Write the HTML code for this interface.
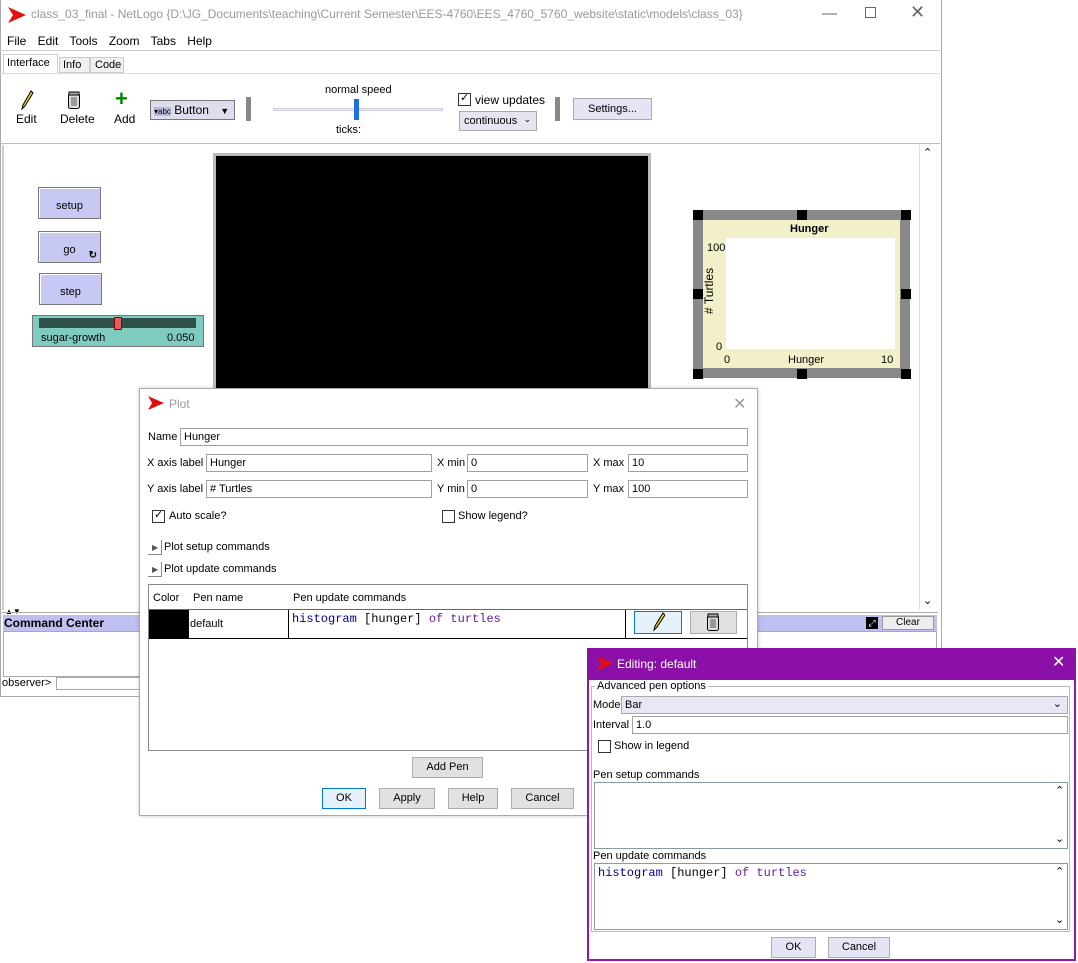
<!DOCTYPE html>
<html><head><meta charset="utf-8"><style>
*{box-sizing:border-box;margin:0;padding:0}
body{width:1078px;height:963px;position:relative;background:#fff;font-family:"Liberation Sans",sans-serif;font-size:12px;color:#000;overflow:hidden}
.a{position:absolute;white-space:nowrap}
.btn{position:absolute;background:#e1e1e1;border:1px solid #adadad;text-align:center;font-size:12px}
.nbtn{position:absolute;background:#c8c8f4;border:1px solid #777;box-shadow:inset 1px 1px 0 #fff;text-align:center;font-size:11px}
.inp{position:absolute;background:#fff;border:1px solid #a0a0a0;padding-left:3px;font-size:11px;line-height:16px}
.mono{font-family:"Liberation Mono",monospace;font-size:12px}
.cb{position:absolute;width:13px;height:13px;border:1px solid #333;background:#fff}
.l{font-size:11px}
</style></head><body>
<div class="a" style="left:0;top:0;width:942px;height:697px;border:1px solid #aaa;border-top:none;background:#fff"></div>
<svg class="a" style="left:8px;top:7px" width="18" height="16"><path d="M0 0 L18 8 L0 16 L5 8Z" fill="#e01010"/></svg>
<div class="a" style="left:31px;top:7px;color:#999;font-size:12px">class_03_final - NetLogo {D:\JG_Documents\teaching\Current Semester\EES-4760\EES_4760_5760_website\static\models\class_03}</div>
<div class="a" style="left:822px;top:5px;color:#666;font-size:15px">—</div>
<div class="a" style="left:865px;top:7px;width:11px;height:11px;border:1px solid #666"></div>
<div class="a" style="left:910px;top:2px;color:#666;font-size:18px">✕</div>
<div class="a" style="left:7px;top:34px;font-size:12px;word-spacing:8px">File Edit Tools Zoom Tabs Help</div>
<div class="a" style="left:0;top:50px;width:940px;height:1px;background:#ccc"></div>
<div class="a" style="left:3px;top:54px;width:55px;height:19px;border:1px solid #ccc;border-bottom:none;background:#fff;padding:2px 3px;font-size:11px">Interface</div>
<div class="a" style="left:59px;top:57px;width:31px;height:16px;border:1px solid #ccc;background:#f0f0f0;padding:1px 3px;font-size:11px">Info</div>
<div class="a" style="left:90px;top:57px;width:34px;height:16px;border:1px solid #ccc;background:#f0f0f0;padding:1px 4px;font-size:11px">Code</div>
<div class="a" style="left:0;top:73px;width:940px;height:71px;border-top:1px solid #ddd;border-bottom:1px solid #bbb"></div>
<svg class="a" style="left:18px;top:90px" width="16" height="20"><path d="M13 1 L5 15 L4 19 L7 16 L15 3Z" fill="#f0d020" stroke="#000"/></svg>
<div class="a" style="left:16px;top:112px">Edit</div>
<svg class="a" style="left:67px;top:91px" width="14" height="18"><rect x="1.5" y="2.5" width="11" height="15" rx="2" fill="#ddd" stroke="#000"/><rect x="2" y="1" width="10" height="3" fill="#aaa" stroke="#000"/><path d="M5 6v9M7 6v9M9 6v9" stroke="#555"/></svg>
<div class="a" style="left:60px;top:112px">Delete</div>
<div class="a" style="left:115px;top:86px;color:#080;font-size:22px;font-weight:bold">+</div>
<div class="a" style="left:114px;top:112px">Add</div>
<div class="a" style="left:150px;top:100px;width:85px;height:20px;border:1px solid #777;background:#dde;font-size:12px;padding:2px 3px"><span style="font-size:8px;background:#bbd">▾abc</span> Button <span style="margin-left:8px;font-size:9px">▼</span></div>
<div class="a" style="left:246px;top:97px;width:5px;height:24px;background:#888"></div>
<div class="a" style="left:325px;top:84px;font-size:11px">normal speed</div>
<div class="a" style="left:273px;top:108px;width:170px;height:3px;border:1px solid #ccd;background:#eef"></div>
<div class="a" style="left:354px;top:99px;width:5px;height:21px;background:#1e70e0"></div>
<div class="a" style="left:336px;top:124px;font-size:11px">ticks:</div>
<div class="cb" style="left:458px;top:93px"><span style="position:absolute;left:1px;top:-3px;font-size:11px">✓</span></div>
<div class="a" style="left:475px;top:93px">view updates</div>
<div class="a" style="left:459px;top:111px;width:78px;height:20px;border:1px solid #aaa;background:#e5e5f0;padding:3px 4px;font-size:11px">continuous <span style="font-size:9px;position:absolute;right:5px;top:2px">⌄</span></div>
<div class="a" style="left:555px;top:97px;width:5px;height:24px;background:#888"></div>
<div class="a" style="left:573px;top:98px;width:79px;height:22px;border:1px solid #aaa;background:#e4e4f4;text-align:center;padding-top:4px;font-size:11px">Settings...</div>
<div class="a" style="left:2px;top:145px;width:2px;height:465px;background:#ccc"></div>
<div class="a" style="left:919px;top:145px;width:18px;height:465px;border-left:1px solid #ddd"></div>
<div class="a" style="left:923px;top:146px;font-size:11px">⌃</div>
<div class="a" style="left:923px;top:594px;font-size:11px">⌄</div>
<div class="nbtn" style="left:38px;top:187px;width:63px;height:32px;line-height:36px">setup</div>
<div class="nbtn" style="left:38px;top:231px;width:63px;height:32px;line-height:36px">go<span style="position:absolute;right:3px;top:6px;font-size:10px;font-weight:bold">↻</span></div>
<div class="nbtn" style="left:39px;top:273px;width:63px;height:32px;line-height:36px">step</div>
<div class="a" style="left:32px;top:315px;width:172px;height:32px;background:#80cbc0;border:1px solid #777"></div>
<div class="a" style="left:39px;top:318px;width:157px;height:10px;background:#2e5048"></div>
<div class="a" style="left:114px;top:317px;width:8px;height:13px;background:#e06060;border:1px solid #800"></div>
<div class="a" style="left:41px;top:332px;font-size:11px">sugar-growth</div>
<div class="a" style="left:167px;top:332px;font-size:11px">0.050</div>
<div class="a" style="left:213px;top:153px;width:438px;height:240px;background:#000;border:3px solid #bbb"></div>
<div class="a" style="left:693px;top:210px;width:217px;height:168px;background:#888"></div>
<div class="a" style="left:703px;top:220px;width:197px;height:148px;background:#f2f0c8"></div>
<div class="a" style="left:726px;top:238px;width:169px;height:111px;background:#fff"></div>
<div class="a" style="left:790px;top:223px;font-weight:bold;font-size:11px">Hunger</div>
<div class="a" style="left:707px;top:242px;font-size:11px">100</div>
<div class="a" style="left:716px;top:341px;font-size:11px">0</div>
<div class="a" style="left:724px;top:354px;font-size:11px">0</div>
<div class="a" style="left:788px;top:354px;font-size:11px">Hunger</div>
<div class="a" style="left:881px;top:354px;font-size:11px">10</div>
<div class="a" style="left:686px;top:284px;font-size:12px;transform:rotate(-90deg)">#&nbsp;Turtles</div>
<div class="a" style="left:693px;top:210px;width:10px;height:10px;background:#000"></div>
<div class="a" style="left:797px;top:210px;width:10px;height:10px;background:#000"></div>
<div class="a" style="left:901px;top:210px;width:10px;height:10px;background:#000"></div>
<div class="a" style="left:693px;top:289px;width:10px;height:10px;background:#000"></div>
<div class="a" style="left:901px;top:289px;width:10px;height:10px;background:#000"></div>
<div class="a" style="left:693px;top:369px;width:10px;height:10px;background:#000"></div>
<div class="a" style="left:797px;top:369px;width:10px;height:10px;background:#000"></div>
<div class="a" style="left:901px;top:369px;width:10px;height:10px;background:#000"></div>
<div class="a" style="left:5px;top:607px;font-size:8px">▲▼</div>
<div class="a" style="left:2px;top:612px;width:936px;height:1px;background:#aaa"></div>
<div class="a" style="left:3px;top:615px;width:934px;height:16px;background:#c0c0f0"></div>
<div class="a" style="left:4px;top:616px;font-weight:bold;font-size:12px">Command Center</div>
<div class="a" style="left:866px;top:617px;width:12px;height:12px;background:#000;color:#fff;font-size:9px;text-align:center;line-height:12px">⤢</div>
<div class="a" style="left:882px;top:616px;width:52px;height:14px;background:#eee;border:1px solid #999;font-size:10px;text-align:center">Clear</div>
<div class="a" style="left:3px;top:631px;width:934px;height:46px;border:1px solid #aaa"></div>
<div class="a" style="left:2px;top:677px;font-size:11px">observer&gt;</div>
<div class="a" style="left:56px;top:677px;width:100px;height:13px;border:1px solid #aaa"></div>
<!-- plot dialog -->
<div class="a" style="left:139px;top:388px;width:619px;height:428px;background:#fff;border:1px solid #aaa;box-shadow:0 0 4px rgba(0,0,0,.2)"></div>
<svg class="a" style="left:148px;top:396px" width="16" height="14"><path d="M0 0 L16 7 L0 14 L4 7Z" fill="#e01010"/></svg>
<div class="a" style="left:169px;top:397px;color:#999;font-size:12px">Plot</div>
<div class="a" style="left:733px;top:394px;color:#999;font-size:16px">✕</div>
<div class="a l" style="left:148px;top:431px">Name</div>
<div class="inp" style="left:180px;top:428px;width:568px;height:18px">Hunger</div>
<div class="a l" style="left:147px;top:457px">X axis label</div>
<div class="inp" style="left:206px;top:454px;width:226px;height:18px">Hunger</div>
<div class="a l" style="left:437px;top:457px">X min</div>
<div class="inp" style="left:467px;top:454px;width:121px;height:18px">0</div>
<div class="a l" style="left:593px;top:457px">X max</div>
<div class="inp" style="left:628px;top:454px;width:120px;height:18px">10</div>
<div class="a l" style="left:147px;top:483px">Y axis label</div>
<div class="inp" style="left:206px;top:480px;width:226px;height:18px"># Turtles</div>
<div class="a l" style="left:437px;top:483px">Y min</div>
<div class="inp" style="left:467px;top:480px;width:121px;height:18px">0</div>
<div class="a l" style="left:593px;top:483px">Y max</div>
<div class="inp" style="left:628px;top:480px;width:120px;height:18px">100</div>
<div class="cb" style="left:152px;top:510px"><span style="position:absolute;left:1px;top:-3px;font-size:11px">✓</span></div>
<div class="a l" style="left:169px;top:510px">Auto scale?</div>
<div class="cb" style="left:442px;top:510px"></div>
<div class="a l" style="left:458px;top:510px">Show legend?</div>
<div class="a" style="left:148px;top:540px;width:14px;height:15px;border-right:1px solid #888;border-bottom:1px solid #888;font-size:8px;padding:3px 4px;color:#555">▶</div>
<div class="a l" style="left:164px;top:541px">Plot setup commands</div>
<div class="a" style="left:148px;top:562px;width:14px;height:15px;border-right:1px solid #888;border-bottom:1px solid #888;font-size:8px;padding:3px 4px;color:#555">▶</div>
<div class="a l" style="left:164px;top:563px">Plot update commands</div>
<div class="a" style="left:148px;top:584px;width:600px;height:167px;border:1px solid #888"></div>
<div class="a" style="left:149px;top:585px;width:598px;height:25px;border-bottom:1px solid #666"></div>
<div class="a l" style="left:153px;top:592px">Color</div>
<div class="a l" style="left:193px;top:592px">Pen name</div>
<div class="a l" style="left:293px;top:592px">Pen update commands</div>
<div class="a" style="left:149px;top:610px;width:40px;height:28px;background:#000"></div>
<div class="a" style="left:149px;top:638px;width:598px;height:1px;background:#000"></div>
<div class="a" style="left:188px;top:610px;width:1px;height:28px;background:#000"></div>
<div class="a" style="left:288px;top:610px;width:1px;height:28px;background:#000"></div>
<div class="a" style="left:625px;top:610px;width:1px;height:28px;background:#000"></div>
<div class="a l" style="left:190px;top:618px">default</div>
<div class="a mono" style="left:292px;top:612px;color:#00008b">histogram <span style="color:#000">[hunger]</span> <span style="color:#6a1b9a">of turtles</span></div>
<div class="a" style="left:634px;top:611px;width:48px;height:23px;border:1px solid #0078d7;background:#e5f1fb"></div>
<svg class="a" style="left:651px;top:612px" width="14" height="20"><path d="M12 1 L4 14 L3 18 L6 15 L14 3Z" fill="#f0d020" stroke="#000"/></svg>
<div class="a" style="left:690px;top:611px;width:47px;height:23px;border:1px solid #adadad;background:#e1e1e1"></div>
<svg class="a" style="left:706px;top:613px" width="14" height="19"><rect x="1.5" y="2.5" width="11" height="15" rx="2" fill="#ddd" stroke="#000"/><rect x="2" y="1" width="10" height="3" fill="#aaa" stroke="#000"/><path d="M5 6v9M7 6v9M9 6v9" stroke="#555"/></svg>
<div class="btn" style="left:412px;top:757px;width:71px;height:21px;line-height:19px;font-size:11px">Add Pen</div>
<div class="btn" style="left:322px;top:788px;width:44px;height:21px;line-height:19px;border-color:#0078d7;background:#e5f1fb;font-size:11px">OK</div>
<div class="btn" style="left:379px;top:788px;width:56px;height:21px;line-height:19px;font-size:11px">Apply</div>
<div class="btn" style="left:448px;top:788px;width:50px;height:21px;line-height:19px;font-size:11px">Help</div>
<div class="btn" style="left:511px;top:788px;width:63px;height:21px;line-height:19px;font-size:11px">Cancel</div>
<!-- editing dialog -->
<div class="a" style="left:587px;top:648px;width:489px;height:313px;background:#fff;border:2px solid #9018b0"></div>
<div class="a" style="left:587px;top:648px;width:489px;height:32px;background:#8a10a8"></div>
<svg class="a" style="left:597px;top:656px" width="16" height="15"><path d="M0 0 L16 7 L0 15 L4 7Z" fill="#e01010"/></svg>
<div class="a" style="left:617px;top:657px;color:#fff;font-size:12px">Editing: default</div>
<div class="a" style="left:1052px;top:652px;color:#fff;font-size:16px">✕</div>
<div class="a" style="left:591px;top:686px;width:479px;height:246px;border:1px solid #bbb"></div>
<div class="a" style="left:595px;top:680px;background:#fff;padding:0 2px;font-size:11px">Advanced pen options</div>
<div class="a" style="left:593px;top:699px;font-size:11px">Mode</div>
<div class="a" style="left:621px;top:696px;width:447px;height:18px;border:1px solid #aaa;background:#e8e8f4;font-size:11px;padding:2px 3px">Bar<span style="position:absolute;right:5px;top:0">⌄</span></div>
<div class="a" style="left:593px;top:719px;font-size:11px">Interval</div>
<div class="inp" style="left:632px;top:716px;width:436px;height:18px;font-size:11px">1.0</div>
<div class="cb" style="left:598px;top:740px"></div>
<div class="a" style="left:614px;top:740px;font-size:11px">Show in legend</div>
<div class="a" style="left:593px;top:769px;font-size:11px">Pen setup commands</div>
<div class="a" style="left:594px;top:782px;width:474px;height:67px;border:1px solid #8899aa"></div>
<div class="a" style="left:1055px;top:784px;font-size:11px">⌃</div>
<div class="a" style="left:1055px;top:832px;font-size:11px">⌄</div>
<div class="a" style="left:593px;top:850px;font-size:11px">Pen update commands</div>
<div class="a" style="left:594px;top:863px;width:474px;height:67px;border:1px solid #8899aa"></div>
<div class="a mono" style="left:598px;top:866px;color:#00008b">histogram <span style="color:#000">[hunger]</span> <span style="color:#6a1b9a">of turtles</span></div>
<div class="a" style="left:1055px;top:865px;font-size:11px">⌃</div>
<div class="a" style="left:1055px;top:913px;font-size:11px">⌄</div>
<div class="btn" style="left:771px;top:937px;width:45px;height:21px;line-height:19px;background:#e4e4f4;font-size:11px">OK</div>
<div class="btn" style="left:828px;top:937px;width:62px;height:21px;line-height:19px;background:#e4e4f4;font-size:11px">Cancel</div>
</body></html>
